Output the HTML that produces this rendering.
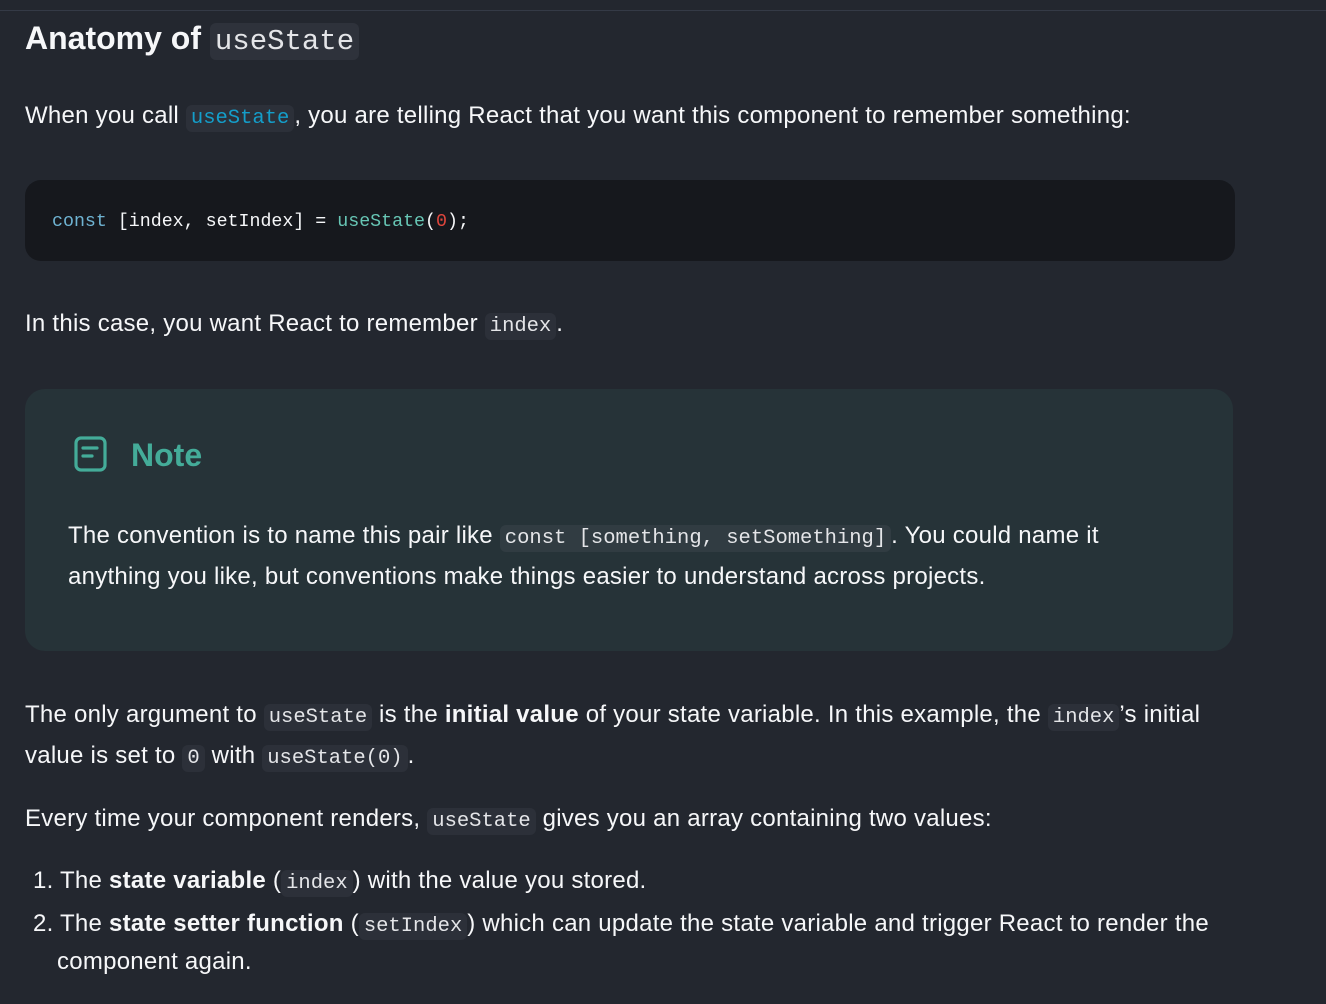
<!DOCTYPE html>
<html><head><meta charset="utf-8"><style>
html,body{margin:0;padding:0;}
body{width:1326px;height:1004px;background:#23272f;position:relative;overflow:hidden;font-family:"Liberation Sans",sans-serif;color:#f6f7f9;}
.topline{position:absolute;left:0;top:10px;width:1326px;height:1px;background:#343a46;}
.l{position:absolute;left:25px;white-space:nowrap;font-size:24px;line-height:40px;height:40px;letter-spacing:0.25px;}
code,.c{font-family:"Liberation Mono",monospace;font-size:20.5px;background:#2c3039;border-radius:6px;padding:2px 5px;color:#e4e5e8;font-weight:normal;letter-spacing:0;}
.note code{background:#313c42;}
b{font-weight:bold;}
.cb{position:absolute;left:25px;top:180px;width:1210px;height:81px;background:#16181d;border-radius:16px;}
.cb div{position:absolute;left:27px;top:32px;font-family:"Liberation Mono",monospace;font-size:18.3px;color:#f6f7f9;white-space:pre;}
.note{position:absolute;left:25px;top:389px;width:1208px;height:262px;background:#263338;border-radius:20px;}
</style></head><body>
<div class="topline"></div>
<div class="l" style="top:18px;font-size:32px;font-weight:bold;letter-spacing:0;">Anatomy of <span class="c" style="font-size:29px;padding:2px 5px;background:#2e323b;">useState</span></div>
<div class="l" style="top:96px;">When you call <code style="color:#149eca">useState</code>, you are telling React that you want this component to remember something:</div>
<div class="cb"><div><span style="color:#6fb3d2">const</span> [index, setIndex] = <span style="color:#67c6b5">useState</span>(<span style="color:#e0463d">0</span>);</div></div>
<div class="l" style="top:304px;">In this case, you want React to remember <code>index</code>.</div>
<div class="note">
<svg style="position:absolute;left:48px;top:46px" width="36" height="38" viewBox="0 0 36 38"><rect x="3" y="3" width="29" height="32" rx="5" fill="none" stroke="#44ac99" stroke-width="3.2"/><path d="M10 13H24M10 21H19" stroke="#44ac99" stroke-width="3.2" stroke-linecap="round"/></svg>
<div style="position:absolute;left:106px;top:46px;font-size:32px;font-weight:bold;color:#44ac99;line-height:40px;">Note</div>
<div class="l" style="left:43px;top:127px;">The convention is to name this pair like <code>const [something, setSomething]</code>. You could name it</div>
<div class="l" style="left:43px;top:168px;">anything you like, but conventions make things easier to understand across projects.</div>
</div>
<div class="l" style="top:695px;">The only argument to <code>useState</code> is the <b>initial value</b> of your state variable. In this example, the <code>index</code>’s initial</div>
<div class="l" style="top:736px;">value is set to <code>0</code> with <code>useState(0)</code>.</div>
<div class="l" style="top:799px;">Every time your component renders, <code>useState</code> gives you an array containing two values:</div>
<div class="l" style="top:861px;left:33px;">1. The <b>state variable</b> (<code>index</code>) with the value you stored.</div>
<div class="l" style="top:904px;left:33px;">2. The <b>state setter function</b> (<code>setIndex</code>) which can update the state variable and trigger React to render the</div>
<div class="l" style="top:942px;left:57px;">component again.</div>
</body></html>
